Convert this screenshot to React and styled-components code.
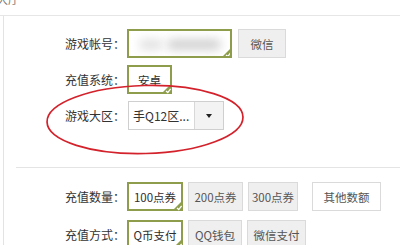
import React from "react";
import styled, { createGlobalStyle } from "styled-components";

const GREEN = "#8d9d4b";

const Global = createGlobalStyle`
  html, body { margin: 0; padding: 0; background: #fff; }
  body {
    font-family: "Noto Sans CJK SC", "Noto Sans", sans-serif;
    overflow: hidden;
  }
`;

const Page = styled.div`
  position: relative;
  width: 400px;
  height: 245px;
  overflow: hidden;
  background: #fff;
`;

const Header = styled.div`
  height: 15px;
  border-bottom: 1px solid #e6e6e6;
  overflow: hidden;
`;

const Title = styled.div`
  margin-top: -7px;
  margin-left: -3px;
  font-size: 11px;
  line-height: 12px;
  color: #777;
`;

const Panel = styled.div`
  margin-left: 3px;
  border-left: 1px solid #e3e3e3;
  height: 229px;
`;

const Section = styled.div`
  display: flex;
  flex-direction: column;
  gap: ${(p) => p.$gap}px;
  padding-top: ${(p) => p.$top}px;
`;

const Row = styled.div`
  display: flex;
  align-items: center;
  height: 29px;
`;

const Label = styled.div`
  width: 121px;
  margin-right: 2px;
  text-align: right;
  font-size: 12px;
  color: #333;
  white-space: nowrap;
`;

const Controls = styled.div`
  display: flex;
  align-items: center;
  gap: 5px;
  height: 100%;
`;

const Option = styled.div`
  position: relative;
  box-sizing: border-box;
  width: ${(p) => p.$w}px;
  height: 29px;
  display: flex;
  align-items: center;
  justify-content: center;
  font-size: 11.5px;
  white-space: nowrap;
  border: ${(p) => (p.$on ? `2px solid ${GREEN}` : "1px solid #dadada")};
  background: ${(p) => (p.$on ? "#fff" : p.$plain ? "#fff" : "#efefef")};
  color: ${(p) => (p.$on ? "#2e2e2e" : "#555")};
  margin-left: ${(p) => p.$ml || 0}px;
`;

const InputBox = styled(Option)`
  justify-content: flex-start;
  overflow: hidden;
`;

const Blur = styled.span`
  position: absolute;
  top: 8px;
  height: 11px;
  border-radius: 6px;
  background: ${(p) => p.$c};
  filter: blur(5px);
`;

const Corner = styled.svg`
  position: absolute;
  right: -2px;
  bottom: -2px;
`;

const Tick = () => (
  <Corner width="11" height="11" viewBox="0 0 11 11">
    <polygon points="11,0 11,11 0,11" fill={GREEN} />
    <polyline points="5,8 6.8,9.6 9.6,5.8" fill="none" stroke="#fff" strokeWidth="1.3" />
  </Corner>
);

const Select = styled.div`
  box-sizing: border-box;
  display: flex;
  width: 96px;
  height: 29px;
  margin-left: 1px;
  border: 1px solid #cfcfcf;
  background: #fff;
`;

const SelectText = styled.div`
  flex: 1;
  display: flex;
  align-items: center;
  padding-left: 4px;
  font-size: 12px;
  color: #333;
  white-space: nowrap;
`;

const SelectArrow = styled.div`
  width: 28px;
  border-left: 1px solid #d8d8d8;
  background: #f3f3f3;
  display: flex;
  align-items: center;
  justify-content: center;
  &::after {
    content: "";
    border-left: 3px solid transparent;
    border-right: 3px solid transparent;
    border-top: 4px solid #222;
  }
`;

const Divider = styled.div`
  margin: 37px 0 0 12px;
  border-top: 1px solid #e4e4e4;
`;

const Circle = styled.svg`
  position: absolute;
  left: 0;
  top: 0;
  pointer-events: none;
`;

export default function App() {
  return (
    <Page>
      <Global />
      <Header>
        <Title>大厅</Title>
      </Header>
      <Panel>
        <Section $top={13} $gap={7}>
          <Row>
            <Label>游戏帐号：</Label>
            <Controls>
              <InputBox $w={105} $on>
                <Blur $c="#e2e2e2" style={{ left: 10, width: 24 }} />
                <Blur $c="#d2d2d2" style={{ left: 38, width: 54 }} />
                <Tick />
              </InputBox>
              <Option $w={48} $ml={1}>微信</Option>
            </Controls>
          </Row>
          <Row>
            <Label>充值系统：</Label>
            <Controls>
              <Option $w={45} $on>
                安卓
                <Tick />
              </Option>
            </Controls>
          </Row>
          <Row>
            <Label>游戏大区：</Label>
            <Controls>
              <Select>
                <SelectText>手Q12区...</SelectText>
                <SelectArrow />
              </Select>
            </Controls>
          </Row>
        </Section>
        <Divider />
        <Section $top={14} $gap={9}>
          <Row>
            <Label>充值数量：</Label>
            <Controls>
              <Option $w={56} $on>
                100点券
                <Tick />
              </Option>
              <Option $w={55}>200点券</Option>
              <Option $w={50}>300点券</Option>
              <Option $w={69} $plain $ml={9}>其他数额</Option>
            </Controls>
          </Row>
          <Row>
            <Label>充值方式：</Label>
            <Controls>
              <Option $w={56} $on>
                Q币支付
                <Tick />
              </Option>
              <Option $w={54}>QQ钱包</Option>
              <Option $w={59}>微信支付</Option>
            </Controls>
          </Row>
        </Section>
      </Panel>
      <Circle width="400" height="245">
        <ellipse
          cx="145"
          cy="119.5"
          rx="98"
          ry="34"
          fill="none"
          stroke="#d3222b"
          strokeWidth="1.7"
          transform="rotate(-1.5 145 119.5)"
        />
      </Circle>
    </Page>
  );
}
